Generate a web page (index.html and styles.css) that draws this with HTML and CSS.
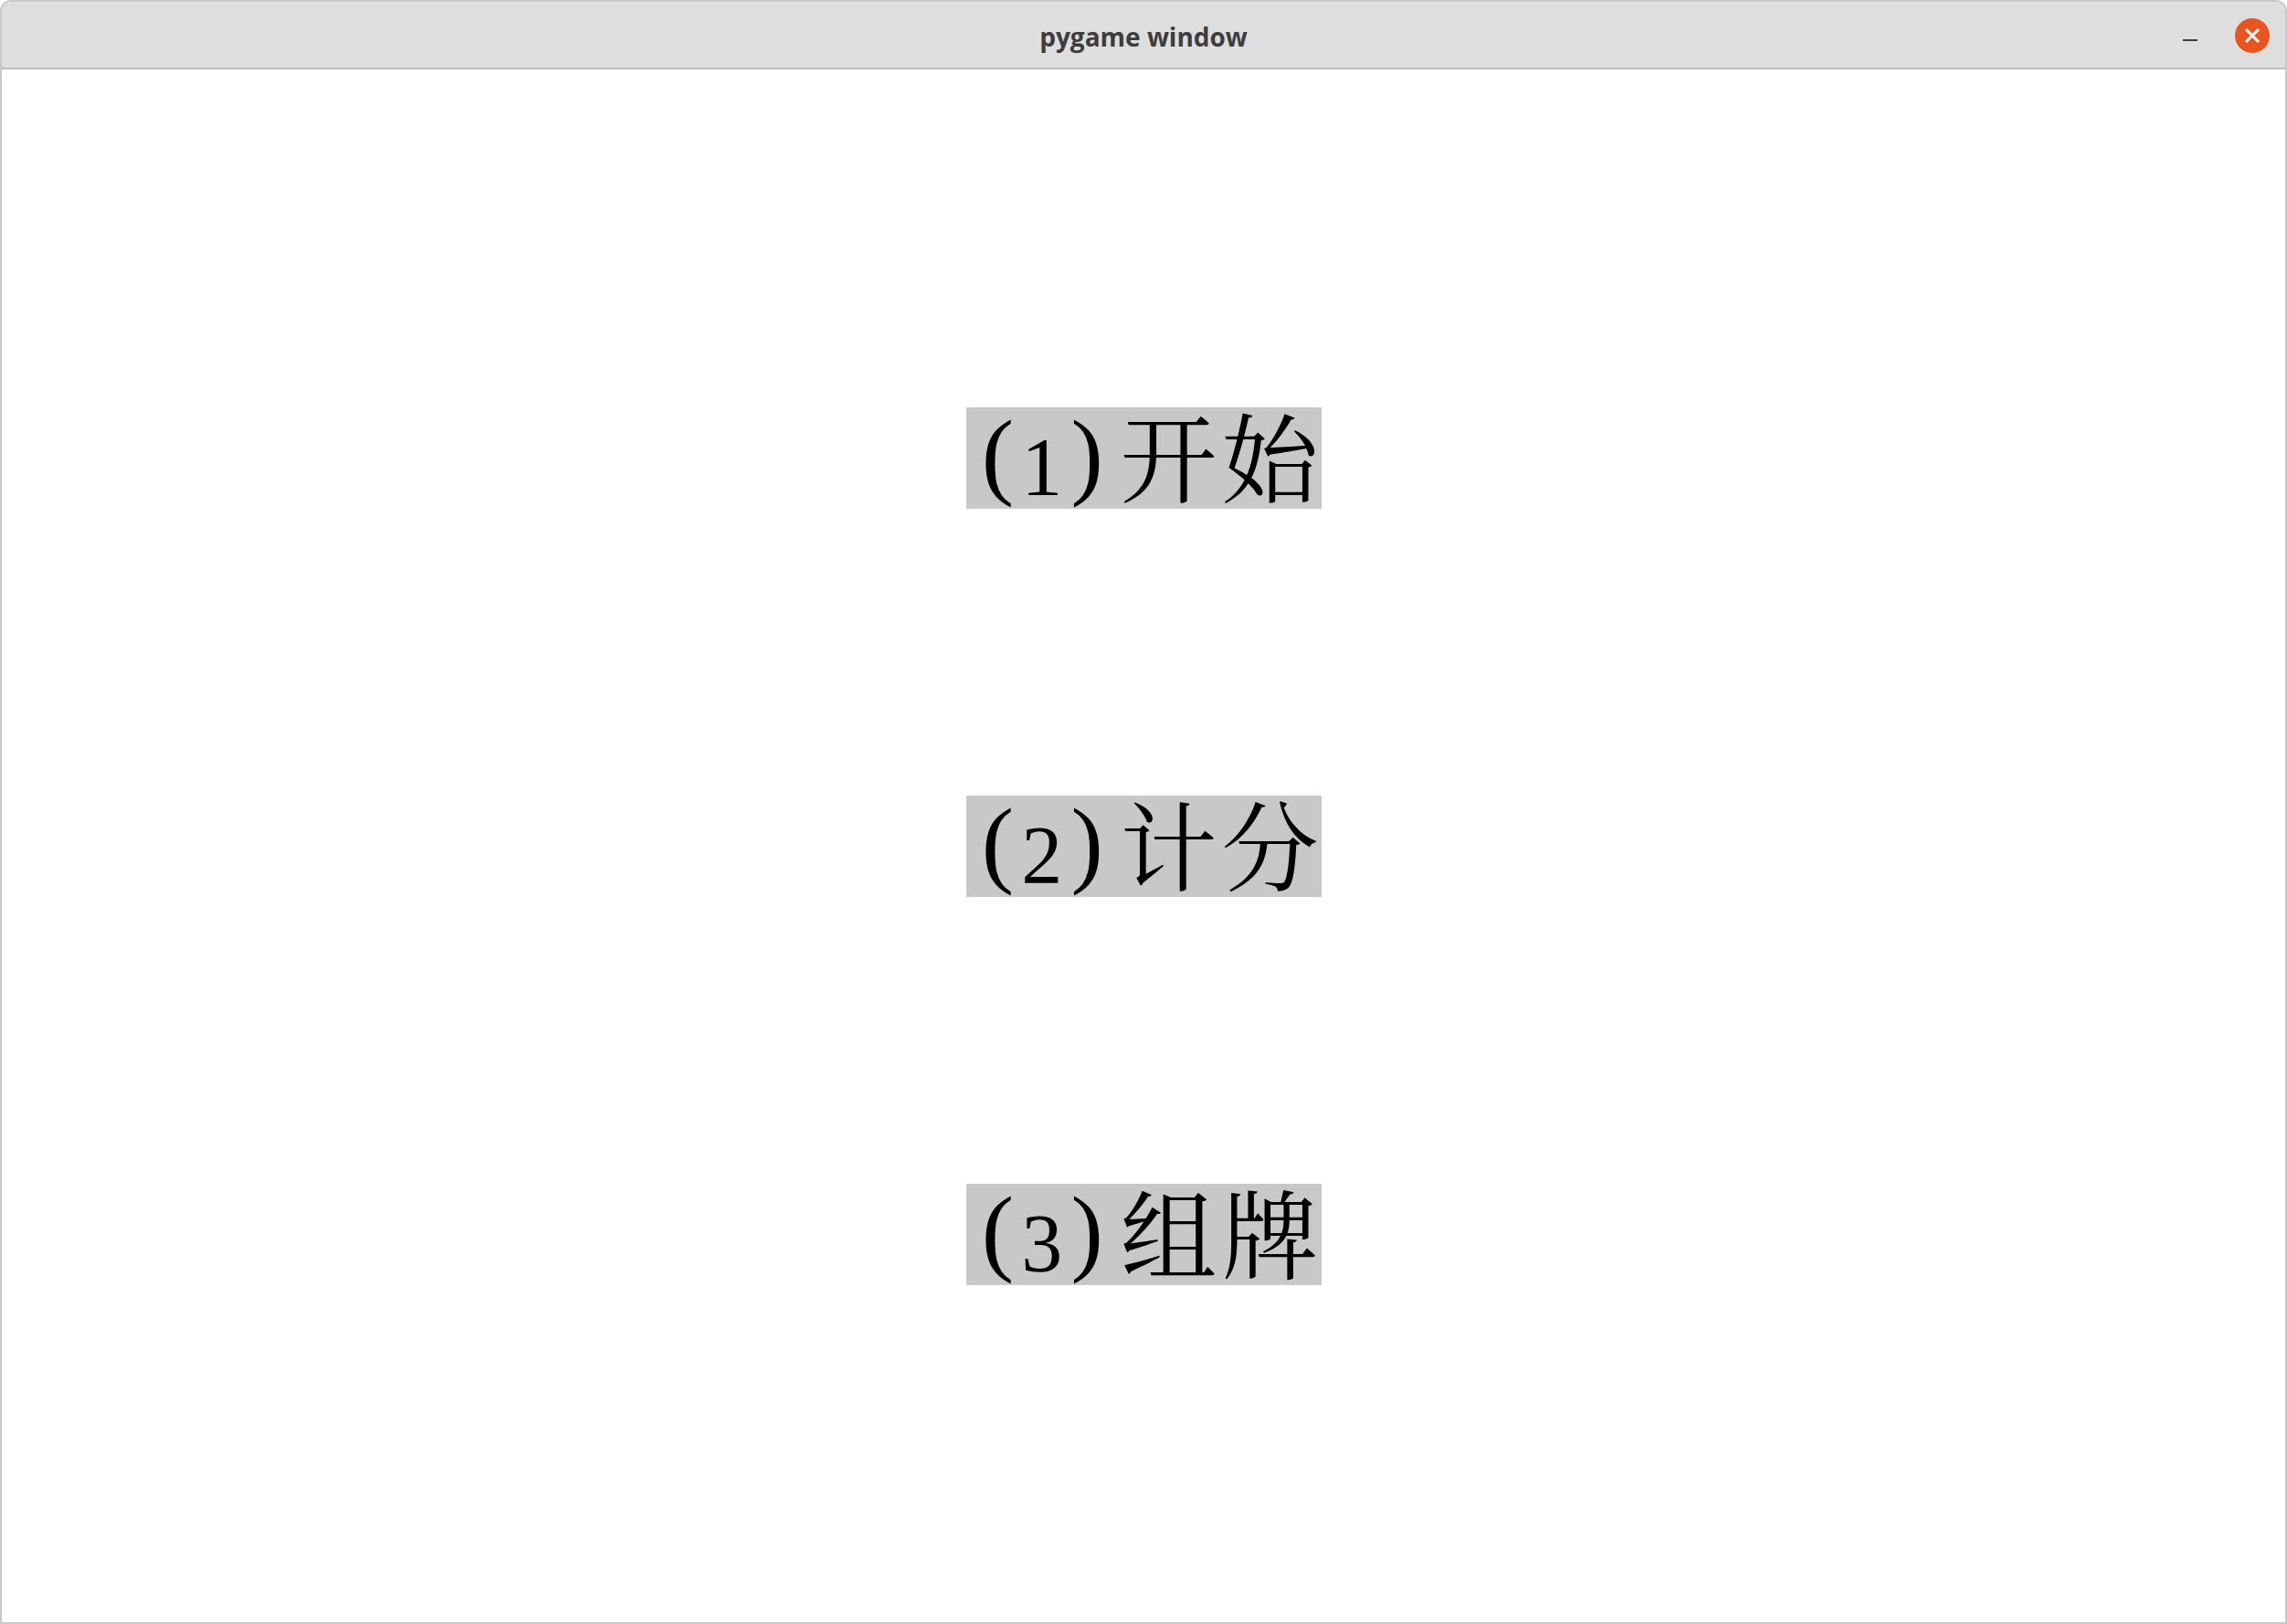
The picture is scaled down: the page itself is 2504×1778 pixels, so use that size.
FILE: index.html
```html
<!DOCTYPE html>
<html lang="zh">
<head>
<meta charset="utf-8">
<title>pygame window</title>
<link rel="stylesheet" href="styles.css">
</head>
<body>
<div class="window">
  <header class="titlebar">
    <div class="side"></div>
    <div class="title">pygame window</div>
    <div class="side controls">
      <span class="minimize"></span>
      <span class="close">
        <svg viewBox="0 0 38 38" width="38" height="38">
          <path d="M12 12 L26 26 M26 12 L12 26" stroke="#ffffff" stroke-width="3" stroke-linecap="butt" fill="none"/>
        </svg>
      </span>
    </div>
  </header>
  <main class="content">
    <div class="label"><span class="cell pl">(</span><span class="cell dg">1</span><span class="cell pr">)</span><span class="cell cj">开</span><span class="cell cj">始</span></div>
    <div class="label"><span class="cell pl">(</span><span class="cell dg">2</span><span class="cell pr">)</span><span class="cell cj">计</span><span class="cell cj">分</span></div>
    <div class="label"><span class="cell pl">(</span><span class="cell dg">3</span><span class="cell pr">)</span><span class="cell cj">组</span><span class="cell cj">牌</span></div>
  </main>
</div>
</body>
</html>
```
FILE: styles.css
```css
html, body {
  margin: 0;
  padding: 0;
  background: #ffffff;
}

.window {
  width: 2504px;
  height: 1778px;
  box-sizing: border-box;
  border: 2px solid #c8c8c8;
  border-radius: 12px 12px 0 0;
  background: #ffffff;
  overflow: hidden;
  display: flex;
  flex-direction: column;
}

.titlebar {
  height: 74px;
  box-sizing: border-box;
  flex: none;
  background: #dedede;
  border-bottom: 2px solid #bcbcbc;
  display: grid;
  grid-template-columns: 1fr auto 1fr;
  align-items: center;
}

.title {
  font-family: "Open Sans", "DejaVu Sans", sans-serif;
  font-weight: 700;
  font-size: 28px;
  color: #3d3d3d;
  line-height: 1;
  padding-top: 4px;
}

.controls {
  display: flex;
  justify-content: flex-end;
  align-items: center;
  gap: 41px;
  padding-right: 17px;
}

.minimize {
  width: 16px;
  height: 2px;
  background: #3c3c3c;
  margin-top: 11px;
}

.close {
  width: 38px;
  height: 38px;
  border-radius: 50%;
  background: #e95420;
  display: flex;
  margin-top: 1px;
}

.content {
  flex: 1;
  display: flex;
  flex-direction: column;
  align-items: center;
  padding-top: 370px;
  gap: 314px;
}

.label {
  width: 389px;
  height: 111px;
  box-sizing: border-box;
  padding-top: 3px;
  background: #c8c8c8;
  color: #000000;
  font-family: "Liberation Serif", serif;
  font-size: 111px;
  line-height: 111px;
  white-space: nowrap;
}

.cell {
  display: inline-block;
  line-height: 0;
  vertical-align: baseline;
}

.pl, .pr, .dg {
  width: 55.5px;
  font-family: "Liberation Serif", serif;
}

.pl {
  font-size: 106px;
  font-weight: 300;
  text-align: right;
  padding-right: 3px;
  box-sizing: border-box;
  vertical-align: 9px;
}

.pr {
  font-size: 106px;
  font-weight: 300;
  text-align: left;
  padding-left: 4px;
  box-sizing: border-box;
  vertical-align: 9px;
}

.dg {
  font-size: 90px;
  text-align: center;
}

.cj {
  width: 111px;
  font-family: "Noto Serif CJK SC", "Noto Sans CJK SC", serif;
  font-size: 106px;
  text-align: center;
}
```
